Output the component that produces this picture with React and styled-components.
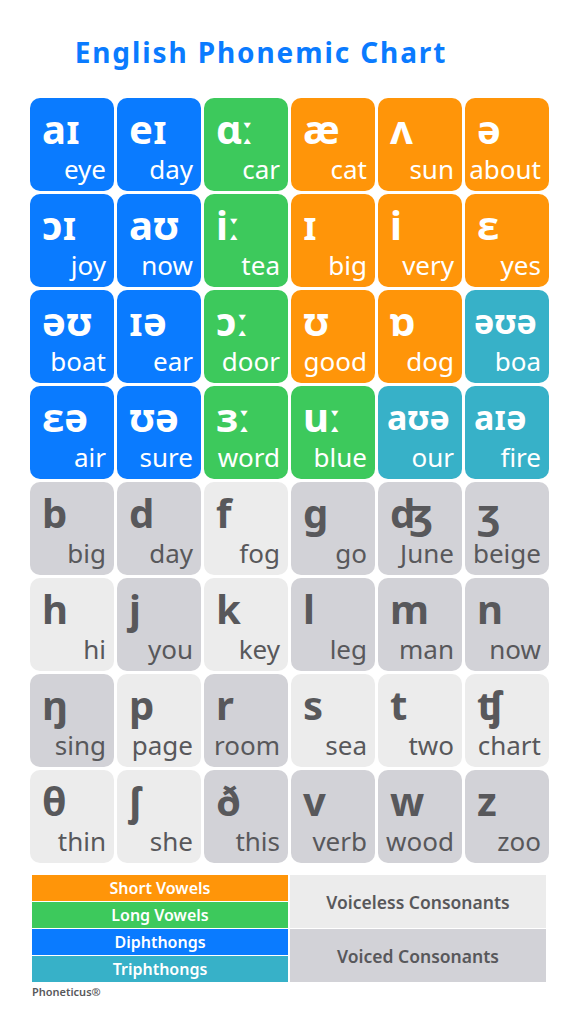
import React from "react";
import styled, { createGlobalStyle } from "styled-components";

const GlobalStyle = createGlobalStyle`
  html, body { margin: 0; padding: 0; background: #ffffff; }
  body { font-family: "Noto Sans", "Open Sans", sans-serif; }
`;

const COLORS = {
  blue: "#0a7bff",
  green: "#3dc95c",
  orange: "#ff9509",
  teal: "#37b1c8",
  voiced: "#d2d2d7",
  voiceless: "#ececec",
};

const isGrey = (k) => k === "voiced" || k === "voiceless";

const Page = styled.div`
  width: 578px;
  height: 1023px;
  display: flex;
  flex-direction: column;
  overflow: hidden;
`;

const Title = styled.h1`
  margin: 0;
  padding: 33px 56px 0 0;
  height: 98px;
  box-sizing: border-box;
  text-align: center;
  font-size: 28px;
  font-weight: 700;
  letter-spacing: 1.9px;
  color: #0a7bff;
  line-height: 38px;
`;

const Grid = styled.div`
  display: grid;
  grid-template-columns: repeat(6, 84px);
  grid-auto-rows: 93px;
  gap: 3px;
  padding-left: 30px;
`;

const Cell = styled.div`
  background: ${(p) => COLORS[p.$kind]};
  color: ${(p) => (isGrey(p.$kind) ? "#58585b" : "#ffffff")};
  border-radius: 10px;
  display: flex;
  flex-direction: column;
  justify-content: space-between;
  padding: 9px 8px 6px ${(p) => (p.$small ? 9 : 12)}px;
  box-sizing: border-box;
  overflow: hidden;
`;

const Symbol = styled.div`
  font-size: ${(p) => (p.$small ? 34 : 40)}px;
  font-weight: 700;
  line-height: 44px;
  white-space: nowrap;
`;

const Word = styled.div`
  display: flex;
  justify-content: flex-end;
  font-size: 26px;
  font-weight: 400;
  line-height: 32px;
  white-space: nowrap;
`;

const Legend = styled.div`
  display: grid;
  grid-template-columns: 256px 256px;
  column-gap: 2px;
  margin: 12px 0 0 32px;
`;

const LegendColumn = styled.div`
  display: grid;
  grid-template-rows: repeat(${(p) => p.$rows}, 1fr);
  row-gap: ${(p) => p.$gap}px;
  height: 107px;
`;

const LegendItem = styled.div`
  background: ${(p) => COLORS[p.$kind]};
  color: ${(p) => (isGrey(p.$kind) ? "#58585b" : "#ffffff")};
  display: flex;
  align-items: center;
  justify-content: center;
  font-size: ${(p) => (p.$big ? 17.5 : 16)}px;
  font-weight: 600;
  white-space: nowrap;
`;

const Footer = styled.div`
  margin: 2px 0 0 32px;
  font-size: 11px;
  font-weight: 600;
  color: #58585b;
`;

const cells = [
  ["aɪ", "eye", "blue"], ["eɪ", "day", "blue"], ["ɑː", "car", "green"], ["æ", "cat", "orange"], ["ʌ", "sun", "orange"], ["ə", "about", "orange"],
  ["ɔɪ", "joy", "blue"], ["aʊ", "now", "blue"], ["iː", "tea", "green"], ["ɪ", "big", "orange"], ["i", "very", "orange"], ["ɛ", "yes", "orange"],
  ["əʊ", "boat", "blue"], ["ɪə", "ear", "blue"], ["ɔː", "door", "green"], ["ʊ", "good", "orange"], ["ɒ", "dog", "orange"], ["əʊə", "boa", "teal"],
  ["ɛə", "air", "blue"], ["ʊə", "sure", "blue"], ["ɜː", "word", "green"], ["uː", "blue", "green"], ["aʊə", "our", "teal"], ["aɪə", "fire", "teal"],
  ["b", "big", "voiced"], ["d", "day", "voiced"], ["f", "fog", "voiceless"], ["g", "go", "voiced"], ["ʤ", "June", "voiced"], ["ʒ", "beige", "voiced"],
  ["h", "hi", "voiceless"], ["j", "you", "voiced"], ["k", "key", "voiceless"], ["l", "leg", "voiced"], ["m", "man", "voiced"], ["n", "now", "voiced"],
  ["ŋ", "sing", "voiced"], ["p", "page", "voiceless"], ["r", "room", "voiced"], ["s", "sea", "voiceless"], ["t", "two", "voiceless"], ["ʧ", "chart", "voiceless"],
  ["θ", "thin", "voiceless"], ["ʃ", "she", "voiceless"], ["ð", "this", "voiced"], ["v", "verb", "voiced"], ["w", "wood", "voiced"], ["z", "zoo", "voiced"],
];

export default function App() {
  return (
    <Page>
      <GlobalStyle />
      <Title>English Phonemic Chart</Title>
      <Grid>
        {cells.map(([sym, word, kind], i) => {
          const small = [...sym].length > 2;
          return (
            <Cell key={i} $kind={kind} $small={small}>
              <Symbol $small={small}>{sym}</Symbol>
              <Word>
                <span>{word}</span>
              </Word>
            </Cell>
          );
        })}
      </Grid>
      <Legend>
        <LegendColumn $rows={4} $gap={1}>
          <LegendItem $kind="orange">Short Vowels</LegendItem>
          <LegendItem $kind="green">Long Vowels</LegendItem>
          <LegendItem $kind="blue">Diphthongs</LegendItem>
          <LegendItem $kind="teal">Triphthongs</LegendItem>
        </LegendColumn>
        <LegendColumn $rows={2} $gap={1}>
          <LegendItem $kind="voiceless" $big>Voiceless Consonants</LegendItem>
          <LegendItem $kind="voiced" $big>Voiced Consonants</LegendItem>
        </LegendColumn>
      </Legend>
      <Footer>Phoneticus®</Footer>
    </Page>
  );
}
